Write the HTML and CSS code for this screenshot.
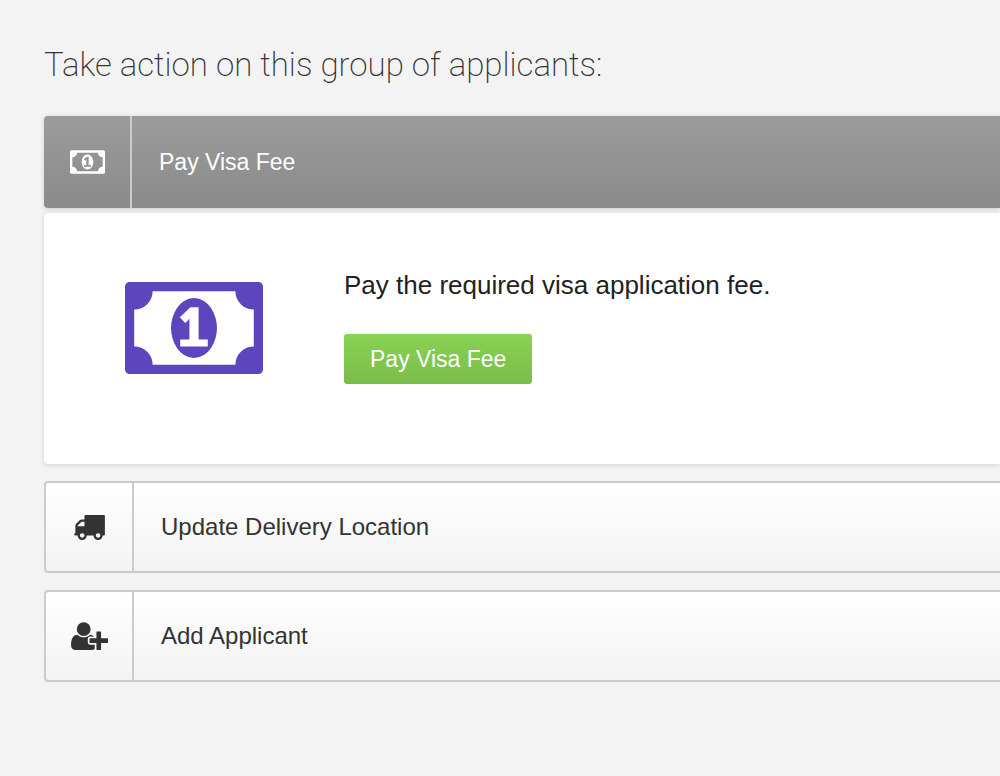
FILE: index.html
```html
<!DOCTYPE html>
<html lang="en">
<head>
<meta charset="utf-8">
<meta name="viewport" content="width=device-width, initial-scale=1">
<title>Applicant actions</title>
<link rel="stylesheet" href="styles.css">
</head>
<body>
<svg class="sprite" aria-hidden="true">
  <symbol id="money" viewBox="0 256 1920 1280"><path d="M768 1152h384v-96h-128v-448h-114l-148 137 77 80q42-37 55-57h2v288h-128v96zM1280 896q0 70-21 142t-59.5 134-101.5 101-138 39-138-39-101.5-101-59.5-134-21-142 21-142 59.5-134 101.5-101 138-39 138 39 101.5 101 59.5 134 21 142zM1792 1152v-512q-106 0-181-75t-75-181h-1152q0 106-75 181t-181 75v512q106 0 181 75t75 181h1152q0-106 75-181t181-75zM1920 320v1152q0 26-19 45t-45 19h-1792q-26 0-45-19t-19-45v-1152q0-26 19-45t45-19h1792q26 0 45 19t19 45z" fill-rule="evenodd"/></symbol>
</svg>
<main class="actions">
  <h1 class="title">Take action on this group of applicants:</h1>
  <section class="item">
    <button class="bar bar-active" type="button" aria-expanded="true" aria-controls="pay-panel">
      <span class="bar-icon"><svg class="icon icon-money" aria-hidden="true"><use href="#money"/></svg></span>
      <span class="bar-label">Pay Visa Fee</span>
    </button>
    <div class="panel" id="pay-panel">
      <svg class="panel-art" aria-hidden="true"><use href="#money"/></svg>
      <div class="panel-body">
        <p class="panel-text">Pay the required visa application fee.</p>
        <button class="pay" type="button">Pay Visa Fee</button>
      </div>
    </div>
  </section>
  <button class="bar" type="button" aria-expanded="false">
    <span class="bar-icon"><svg class="icon icon-truck" viewBox="0 256 1792 1408" aria-hidden="true"><path fill-rule="evenodd" d="M640 1408q0-52-38-90t-90-38-90 38-38 90 38 90 90 38 90-38 38-90zM256 896h384v-256h-158q-13 0-22 9l-195 195q-9 9-9 22v30zM1536 1408q0-52-38-90t-90-38-90 38-38 90 38 90 90 38 90-38 38-90zM1792 320v1024q0 15-4 26.500t-13.500 18.500-16.500 11.500-23.500 6-22.500 2-25.500 0-22.500-.5q0 106-75 181t-181 75-181-75-75-181h-384q0 106-75 181t-181 75-181-75-75-181h-64q-3 0-22.500.5t-25.500 0-22.500-2-23.500-6-16.500-11.500-13.500-18.500-4-26.500q0-26 19-45t45-19v-320q0-8-.5-35t0-38 2.500-34.500 6.500-37 14-30.500 22.500-30l198-198q19-19 50.500-32t58.500-13h160v-192q0-26 19-45t45-19h1024q26 0 45 19t19 45z"/></svg></span>
    <span class="bar-label">Update Delivery Location</span>
  </button>
  <button class="bar" type="button" aria-expanded="false">
    <span class="bar-icon"><svg class="icon icon-user" viewBox="0 128 2048 1536" aria-hidden="true"><path d="M704 896q-159 0-271.5-112.500t-112.500-271.500 112.500-271.500 271.500-112.500 271.500 112.500 112.500 271.500-112.500 271.500-271.500 112.500zM1664 1024h352q13 0 22.500 9.500t9.500 22.500v192q0 13-9.500 22.500t-22.500 9.500h-352v352q0 13-9.500 22.500t-22.500 9.500h-192q-13 0-22.500-9.500t-9.500-22.500v-352h-352q-13 0-22.500-9.500t-9.500-22.500v-192q0-13 9.500-22.500t22.500-9.500h352v-352q0-13 9.500-22.500t22.500-9.500h192q13 0 22.500 9.500t9.500 22.500v352zM928 1248q0 52 38 90t90 38h256v238q-68 50-171 50h-874q-121 0-194-69t-73-190q0-53 3.500-103.500t14-109 26.500-108.500 43-97.500 62-81 85.500-53.500 111.500-20q19 0 39 17 79 61 154.500 91.500t164.500 30.500 164.500-30.500 154.500-91.500q20-17 39-17 132 0 217 96h-223q-52 0-90 38t-38 90v192z"/></svg></span>
    <span class="bar-label">Add Applicant</span>
  </button>
</main>
</body>
</html>
```
FILE: styles.css
```css
* {
  box-sizing: border-box;
}

body {
  margin: 0;
  background: #f3f3f3;
  color: #333;
  font-family: "Liberation Sans", Arial, sans-serif;
  font-size: 24px;
  line-height: 32px;
}

.sprite {
  display: none;
}

.actions {
  display: flex;
  flex-direction: column;
  gap: 17px;
  padding: 43px 0 44px 44px;
}

.title {
  margin: 0 0 12px;
  font-family: Roboto, "Helvetica Neue", sans-serif;
  font-size: 33px;
  font-weight: 200;
  line-height: 44px;
}

.item {
  display: flex;
  flex-direction: column;
  gap: 5px;
}

.bar {
  display: flex;
  width: 100%;
  height: 92px;
  padding: 0;
  border: 2px solid #cbcbcb;
  border-right: 0;
  border-radius: 4px 0 0 4px;
  background: linear-gradient(#fff, #f3f3f3);
  color: #333;
  font: inherit;
  text-align: left;
}

.bar-active {
  border: 0;
  background: linear-gradient(#9b9b9b, #8b8b8b);
  box-shadow: 0 1px 4px rgba(0, 0, 0, 0.16);
  color: #fff;
  font-size: 23px;
}

.bar-icon {
  display: flex;
  flex: 0 0 88px;
  align-items: center;
  justify-content: center;
  align-self: stretch;
  border-right: 2px solid #cbcbcb;
}

.bar-label {
  align-self: center;
  padding-left: 27px;
}

.icon,
.panel-art {
  fill: currentColor;
}

.icon-money {
  width: 35px;
  height: 24px;
}

.icon-truck {
  width: 32px;
  height: 25px;
}

.icon-user {
  width: 37px;
  height: 28px;
}

.panel {
  display: flex;
  align-items: flex-start;
  gap: 81px;
  padding: 56px 0 80px 81px;
  border-radius: 4px 0 0 4px;
  background: #fff;
  box-shadow: 0 1px 5px rgba(0, 0, 0, 0.14);
}

.panel-art {
  flex: none;
  width: 138px;
  height: 92px;
  margin-top: 13px;
  color: #5c45bd;
}

.panel-text {
  margin: 0 0 33px;
  color: #222;
  font-size: 26px;
}

.pay {
  padding: 9px 26px;
  border: 0;
  border-radius: 3px;
  background: linear-gradient(#89d253, #7abd4b);
  color: #fff;
  font: inherit;
  font-size: 23px;
}
```
